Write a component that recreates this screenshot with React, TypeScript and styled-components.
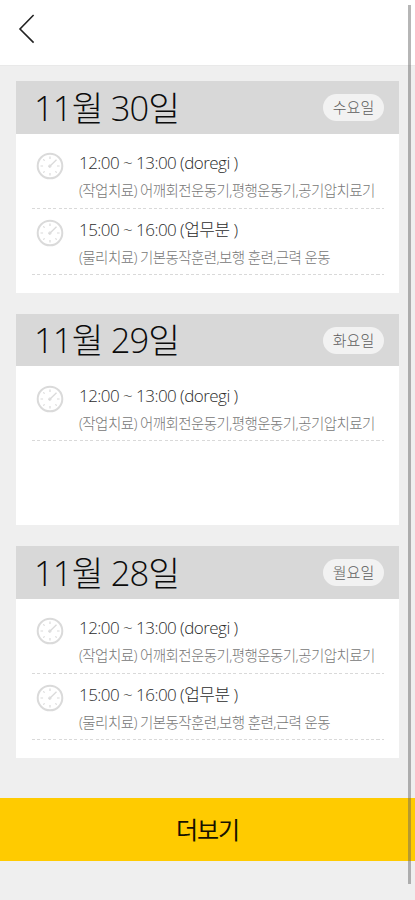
import React from "react";
import styled, { createGlobalStyle } from "styled-components";

const GlobalStyle = createGlobalStyle`
  * { box-sizing: border-box; }
  body { margin: 0; background: #efefef; font-family: "Open Sans", "Noto Sans CJK KR", sans-serif; }
`;

const Screen = styled.div`
  position: relative;
  width: 415px;
  height: 900px;
  overflow: hidden;
  background: #efefef;
`;

const TopBar = styled.header`
  display: flex;
  align-items: center;
  height: 66px;
  padding: 0 0 8px 18px;
  background: #fff;
  border-bottom: 1px solid #e9e9e9;
`;

const BackButton = styled.button`
  display: flex;
  padding: 0;
  border: 0;
  background: none;
`;

const CardList = styled.main`
  display: flex;
  flex-direction: column;
  gap: 21px;
  padding: 15.3px 16px 0;
`;

const Card = styled.section`
  height: 211.5px;
  background: #fff;
`;

const CardHeader = styled.div`
  display: flex;
  align-items: center;
  justify-content: space-between;
  height: 52.5px;
  padding: 0 15px 0 18px;
  background: #d8d8d8;
`;

const CardTitle = styled.h2`
  margin: 0;
  color: #0c0c0c;
  font-size: 34.5px;
  line-height: 52px;
  font-weight: 300;
  letter-spacing: -0.85px;
  white-space: nowrap;
`;

const DayBadge = styled.span`
  display: flex;
  align-items: center;
  justify-content: center;
  width: 61px;
  height: 27px;
  border-radius: 14px;
  background: #f2f2f2;
  color: #5c5c5c;
  font-size: 15px;
  line-height: 27px;
  font-weight: 300;
`;

const Sessions = styled.ul`
  margin: 0;
  padding: 8.5px 15px 0 16px;
  list-style: none;
`;

const Session = styled.li`
  display: flex;
  height: 66.5px;
  padding: 10px 0 0 4px;
  background: repeating-linear-gradient(90deg, #d9d9d9 0 3px, #fff 3px 5.3px) 0 100% / 100% 1px no-repeat;
`;

const SessionText = styled.div`
  display: flex;
  flex-direction: column;
  margin-left: 15px;
  white-space: nowrap;
`;

const SessionTime = styled.div<{ $spacing: number }>`
  height: 26px;
  line-height: 26px;
  margin-top: -2px;
  color: #2c2c2c;
  font-size: 17px;
  font-weight: 300;
  letter-spacing: ${(p) => p.$spacing}px;
`;

const SessionDetail = styled.div<{ $spacing: number }>`
  height: 30px;
  line-height: 30px;
  color: #777;
  font-size: 14.5px;
  font-weight: 300;
  letter-spacing: ${(p) => p.$spacing}px;
`;

const MoreButton = styled.button`
  display: flex;
  align-items: center;
  justify-content: center;
  width: 100%;
  height: 63px;
  margin-top: 40.5px;
  padding: 0 0 2px;
  border: 0;
  background: #ffcb00;
  color: #161200;
  font-family: inherit;
  font-size: 24px;
  font-weight: 400;
  letter-spacing: -1px;
`;

const ScrollThumb = styled.div`
  position: absolute;
  top: 5px;
  left: 408px;
  width: 3px;
  height: 879px;
  background: rgba(100, 100, 100, 0.47);
`;

const BackIcon = () => (
  <svg width="18" height="30" viewBox="0 0 18 30" fill="none" stroke="#222" strokeWidth="1.6">
    <path d="M15.6 1 L2 15 L15.6 28.6" />
  </svg>
);

const ClockIcon = () => (
  <svg width="28" height="28" viewBox="0 0 28 28" fill="none" stroke="#dadada">
    <circle cx="14" cy="14" r="12.3" strokeWidth="2" />
    <path
      d="M14 4.5v2.6M14 21v2.6M4.5 14h2.6M21 14h2.6M7.3 7.3l1.3 1.3M19.4 19.4l1.3 1.3M7.3 20.7l1.3-1.3"
      strokeWidth="1.2"
    />
    <path d="M13 15 L20.5 7.7" strokeWidth="1.3" />
    <circle cx="13.8" cy="14.2" r="1.2" strokeWidth="1" />
  </svg>
);

type Entry = { time: string; timeSpacing: number; detail: string; detailSpacing: number };

const morning: Entry = {
  time: "12:00 ~ 13:00 (doregi )",
  timeSpacing: -0.54,
  detail: "(작업치료) 어깨회전운동기,평행운동기,공기압치료기",
  detailSpacing: -0.58,
};

const afternoon: Entry = {
  time: "15:00 ~ 16:00 (업무분 )",
  timeSpacing: -0.54,
  detail: "(물리치료) 기본동작훈련,보행 훈련,근력 운동",
  detailSpacing: -0.58,
};

const days = [
  { date: "11월 30일", weekday: "수요일", entries: [morning, afternoon] },
  { date: "11월 29일", weekday: "화요일", entries: [morning] },
  { date: "11월 28일", weekday: "월요일", entries: [morning, afternoon] },
];

export default function App() {
  return (
    <>
      <GlobalStyle />
      <Screen>
        <TopBar>
          <BackButton aria-label="뒤로">
            <BackIcon />
          </BackButton>
        </TopBar>
        <CardList>
          {days.map((day) => (
            <Card key={day.date}>
              <CardHeader>
                <CardTitle>{day.date}</CardTitle>
                <DayBadge>{day.weekday}</DayBadge>
              </CardHeader>
              <Sessions>
                {day.entries.map((entry) => (
                  <Session key={entry.time}>
                    <ClockIcon />
                    <SessionText>
                      <SessionTime $spacing={entry.timeSpacing}>{entry.time}</SessionTime>
                      <SessionDetail $spacing={entry.detailSpacing}>{entry.detail}</SessionDetail>
                    </SessionText>
                  </Session>
                ))}
              </Sessions>
            </Card>
          ))}
        </CardList>
        <MoreButton>더보기</MoreButton>
        <ScrollThumb />
      </Screen>
    </>
  );
}
